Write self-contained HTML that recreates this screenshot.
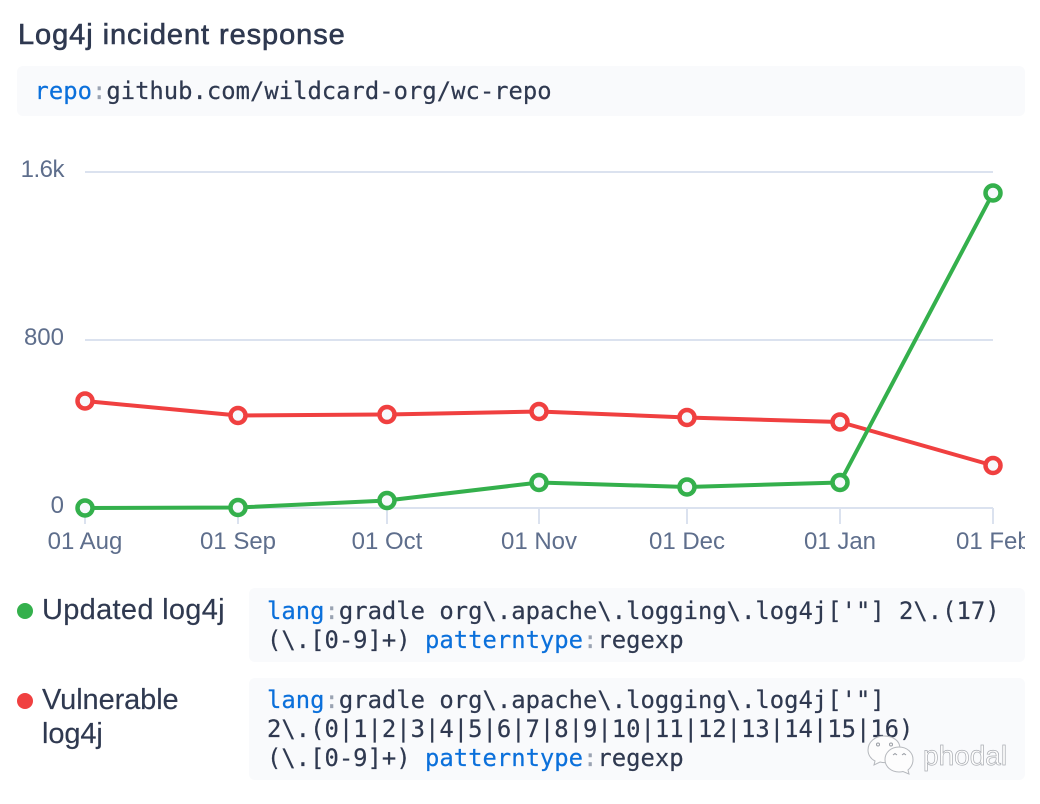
<!DOCTYPE html>
<html>
<head>
<meta charset="utf-8">
<style>
html,body{margin:0;padding:0;background:#fff}
body{width:1040px;height:804px;position:relative;overflow:hidden;font-family:"Liberation Sans",sans-serif;color:#2f3950}
.box{position:absolute;background:#f9fafc;border-radius:6px}
.code{position:absolute;font-family:"DejaVu Sans Mono","Liberation Mono",monospace;font-size:23.86px;line-height:29px;white-space:pre;color:#2f3950;-webkit-text-stroke:.2px currentColor}
.k{color:#0b70db}.c{color:#9aa3b2}
.t{position:absolute;white-space:nowrap}
.leg{position:absolute;font-size:29px;line-height:34px;white-space:nowrap;color:#2f3950;-webkit-text-stroke:.15px #2f3950}
.dot{position:absolute;width:16px;height:16px;border-radius:50%}
svg{position:absolute;left:0;top:0}
</style>
</head>
<body>
<div class="t" style="left:18px;top:18px;font-size:29px;line-height:34px;font-weight:400;-webkit-text-stroke:.6px #2f3950;letter-spacing:.93px">Log4j incident response</div>
<div class="box" style="left:17px;top:66px;width:1008px;height:50px"></div>
<div class="code" style="left:34.500px;top:77px"><span class="k">repo</span><span class="c">:</span>github.com/wildcard-org/wc-repo</div>

<svg width="1040" height="804" viewBox="0 0 1040 804">
<g stroke="#dbe2ef" stroke-width="2" fill="none">
<path d="M85 172H993M85 340H993M85 508H993"/>
<path d="M85 508V524M238 508V524M387 508V524M539 508V524M687 508V524M840 508V524M993 508V524"/>
</g>
<g font-family="Liberation Sans" font-size="24" fill="#5e6e8c">
<text x="64" y="177" text-anchor="end" letter-spacing="-.5">1.6k</text>
<text x="64" y="345" text-anchor="end">800</text>
<text x="64" y="513" text-anchor="end">0</text>
<text x="85" y="549" text-anchor="middle">01 Aug</text>
<text x="238" y="549" text-anchor="middle">01 Sep</text>
<text x="387" y="549" text-anchor="middle">01 Oct</text>
<text x="539" y="549" text-anchor="middle">01 Nov</text>
<text x="687" y="549" text-anchor="middle">01 Dec</text>
<text x="840" y="549" text-anchor="middle">01 Jan</text>
<svg x="0" y="520" width="1025" height="50" viewBox="0 520 1025 50"><text x="956" y="549">01 Feb</text></svg>
</g>
<g fill="none" stroke-width="4" stroke-linejoin="round">
<polyline stroke="#f04040" points="85,401 238,415.5 387,414.5 539,411.5 687,417.5 840,422 993,465.5"/>
<polyline stroke="#34b04c" points="85,508 238,507.5 387,500.5 539,482.5 687,487 840,482.5 993,193"/>
</g>
<g fill="#f7f9fc" stroke="#f04040" stroke-width="4.500">
<circle cx="85" cy="401" r="7.5"/><circle cx="238" cy="415.5" r="7.5"/><circle cx="387" cy="414.5" r="7.5"/><circle cx="539" cy="411.5" r="7.5"/><circle cx="687" cy="417.5" r="7.5"/><circle cx="840" cy="422" r="7.5"/><circle cx="993" cy="465.5" r="7.5"/>
</g>
<g fill="#f7f9fc" stroke="#34b04c" stroke-width="4.500">
<circle cx="85" cy="508" r="7.5"/><circle cx="238" cy="507.5" r="7.5"/><circle cx="387" cy="500.5" r="7.5"/><circle cx="539" cy="482.5" r="7.5"/><circle cx="687" cy="487" r="7.5"/><circle cx="840" cy="482.5" r="7.5"/><circle cx="993" cy="193" r="7.5"/>
</g>
</svg>

<div class="dot" style="left:17px;top:602.500px;background:#34b04c"></div>
<div class="leg" style="left:42px;top:593px;letter-spacing:.3px">Updated log4j</div>
<div class="box" style="left:249px;top:588px;width:776px;height:74px"></div>
<div class="code" style="left:267px;top:597px"><span class="k">lang</span><span class="c">:</span>gradle org\.apache\.logging\.log4j['"] 2\.(17)
(\.[0-9]+) <span class="k">patterntype</span><span class="c">:</span>regexp</div>

<div class="dot" style="left:17px;top:693px;background:#f04040"></div>
<div class="leg" style="left:42px;top:683px;letter-spacing:-.1px">Vulnerable<br>log4j</div>
<div class="box" style="left:249px;top:678px;width:776px;height:102px"></div>
<div class="code" style="left:267px;top:686px"><span class="k">lang</span><span class="c">:</span>gradle org\.apache\.logging\.log4j['"]
2\.(0|1|2|3|4|5|6|7|8|9|10|11|12|13|14|15|16)
(\.[0-9]+) <span class="k">patterntype</span><span class="c">:</span>regexp</div>

<svg width="1040" height="804" viewBox="0 0 1040 804">
<g fill="#fdfdfd" stroke="#b5b8bd" stroke-width="1">
<path d="M884 736c-9 0-16 6-16 14 0 5 3 9 7 11l-1 4 6-3c2 .5 3 .6 5 .6 8 0 15-6 15-14s-7-12.600-16-12.600z"/>
<path d="M899 747c-8 0-14 5.500-14 12.500s6 12.500 14 12.500c1.500 0 3-.2 4-.5l6 2.500-1-4c3-2.500 5-6 5-10.500 0-7-6-12.500-14-12.500z"/>
</g>
<g fill="none" stroke="#9a9ea5" stroke-width="1">
<circle cx="878" cy="744.500" r="1.500"/><circle cx="891" cy="744.500" r="1.500"/>
<path d="M893 755l2-1.500 2 1.500M902 755l2-1.500 2 1.500"/>
</g>
<text x="923" y="765" font-family="Liberation Sans" font-size="28" fill="#fdfdfd" stroke="#a9acb2" stroke-width=".7">phodal</text>
</svg>
</body>
</html>
